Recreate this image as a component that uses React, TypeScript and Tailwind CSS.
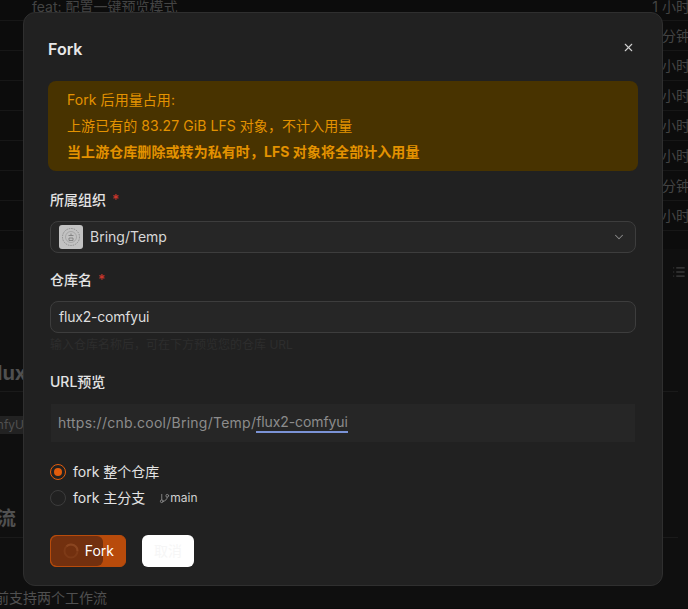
import { ChevronDown, GitBranch, List, X } from "lucide-react";

const font = "font-['Inter','Noto_Sans_CJK_SC',sans-serif]";

const rows = ["1 小时前", "9 分钟前", "2 小时前", "2 小时前", "2 小时前", "2 小时前", "9 分钟前", "2 小时前"];

function Label({ text, required }: { text: string; required?: boolean }) {
    return (
        <div className="flex h-5 items-center gap-1.5 text-sm font-medium leading-5 text-[#e4e4e4]">
            {text}
            {required && <span className="text-[#c9352b]">*</span>}
        </div>
    );
}

function Radio({ checked, children }: { checked?: boolean; children: React.ReactNode }) {
    return (
        <div className="flex h-[26px] items-center gap-[7px] text-sm text-[#e4e4e4]">
            <span className={`flex size-4 items-center justify-center rounded-full border ${checked ? "border-[#e25c0c]" : "border-[#3c3c3c]"}`}>
                {checked && <span className="size-2 rounded-full bg-[#e25c0c]" />}
            </span>
            {children}
        </div>
    );
}

export default function App() {
    return (
        <div className={`relative h-[609px] w-[688px] overflow-hidden bg-[#0c0c0c] ${font}`}>
            {/* page behind the dialog */}
            <div className="flex w-[704px] flex-col text-sm text-[#444]">
                {rows.map((time, i) => (
                    <div key={i} className={`flex items-center justify-between border-b border-[#171717] pl-8 ${i === 0 ? "h-[21px] pb-[6px]" : "h-[30px] pt-px"}`}>
                        <span>{i === 0 ? "feat: 配置一键预览模式" : ""}</span>
                        <span>{time}</span>
                    </div>
                ))}
            </div>
            <div className="mt-[18px] flex h-[359px] flex-col bg-[#0f0f0f] text-[#505050]">
                <div className="flex h-[46px] items-center justify-end pr-0.5">
                    <List size={14} strokeWidth={1.5} className="text-[#555]" />
                </div>
                <div className="mr-2.5 flex h-[98px] items-end border-b border-[#1a1a1a] pb-1 text-xl font-bold">
                    <span className="-ml-[11px]">flux</span>
                </div>
                <div className="mt-6 flex h-[18px] w-[24px] justify-end overflow-hidden bg-[#222] text-xs leading-[18px]">
                    <span className="whitespace-nowrap">comfyU</span>
                </div>
                <div className="mr-2.5 flex h-[104px] items-end border-b border-[#1a1a1a] pb-1 text-xl font-bold">
                    <span className="-ml-1">流</span>
                </div>
                <div className="-ml-[5px] mt-[50px] whitespace-nowrap text-sm">前支持两个工作流</div>
            </div>

            {/* dialog */}
            <div className="absolute left-[23px] top-3 flex h-[574px] w-[640px] flex-col rounded-xl border border-[#2f2f2f] bg-[#212121] pl-6 pr-6">
                <div className="flex h-[68px] shrink-0 items-center justify-between pr-[3px]">
                    <h2 className="mt-1 text-base font-semibold text-[#e8e8e8]">Fork</h2>
                    <X size={13} strokeWidth={2} className="text-[#d0d0d0]" />
                </div>

                <div className="h-[90px] w-[590px] shrink-0 rounded-lg bg-[#483300] px-[19px] py-1.5 text-sm leading-[26px] tracking-[0.07px] text-[#e39200]">
                    <div>Fork 后用量占用:</div>
                    <div>上游已有的 83.27 GiB LFS 对象，不计入用量</div>
                    <div className="font-bold">当上游仓库删除或转为私有时，LFS 对象将全部计入用量</div>
                </div>

                <div className="mt-[19px] flex w-[590px] flex-col pl-0.5 pr-0.5">
                    <Label text="所属组织" required />
                    <div className="mt-[11px] flex h-8 items-center gap-[7px] rounded-lg border border-[#3d3d3d] bg-[#262626] pl-2 pr-[9px] text-sm text-[#d8d8d8]">
                        <svg width="24" height="24" viewBox="0 0 24 24" className="shrink-0">
                            <rect width="24" height="24" rx="3" fill="#c2c2c2" />
                            <circle cx="12" cy="12" r="8.5" fill="none" stroke="#8d8d8d" strokeWidth="1" strokeDasharray="1.5 1" />
                            <circle cx="12" cy="12" r="5.5" fill="none" stroke="#a0a0a0" strokeWidth="0.8" />
                            <path d="M9.5 10.5h5M10 13h4v2.5h-4zM12 8.5v2" fill="none" stroke="#7f7f7f" strokeWidth="0.9" />
                        </svg>
                        <span className="flex-1">Bring/Temp</span>
                        <ChevronDown size={14} strokeWidth={1.75} className="text-[#8a8a8a]" />
                    </div>

                    <div className="mt-[17px]">
                        <Label text="仓库名" required />
                    </div>
                    <div className="mt-[11px] flex h-8 items-center rounded-lg border border-[#3d3d3d] bg-[#262626] px-2 text-sm tracking-[-0.2px] text-[#dedede]">
                        flux2-comfyui
                    </div>
                    <div className="mt-0.5 h-5 text-xs leading-5 text-[#2d2d2d]">输入仓库名称后，可在下方预览您的仓库 URL</div>

                    <div className="mt-[17px]">
                        <Label text="URL预览" />
                    </div>
                    <div className="mx-px mt-3 flex h-[38px] items-center bg-[#262626] px-[7px] text-sm text-[#8c8c8c]">
                        <span className="tracking-[0.25px]">https://cnb.cool/Bring/Temp/</span>
                        <span className="border-b-2 border-[#7b93d6] leading-[18px] tracking-[-0.1px]">flux2-comfyui</span>
                    </div>

                    <div className="mt-[17px] flex flex-col">
                        <Radio checked>fork 整个仓库</Radio>
                        <Radio>
                            fork 主分支
                            <span className="ml-[7px] flex items-center text-xs text-[#d0d0d0]">
                                <GitBranch size={11} strokeWidth={2} className="text-[#8a8a8a]" />
                                main
                            </span>
                        </Radio>
                    </div>

                    <div className="mt-6 flex gap-4">
                        <button className="relative flex h-8 w-[76px] items-center justify-end overflow-hidden rounded-md border border-[#b84b0b] bg-[#b84b0b] pr-[11px] text-sm text-white">
                            <span className="absolute inset-y-0 left-0 flex w-[52px] items-center rounded-md bg-[#72300f] pl-3">
                                <svg width="16" height="16" viewBox="0 0 16 16" fill="none">
                                    <circle cx="8" cy="8" r="6.5" stroke="#7d3a17" strokeWidth="2" />
                                    <path d="M3.4 3.4A6.5 6.5 0 0 1 14.5 8" stroke="#8a4520" strokeWidth="2" />
                                </svg>
                            </span>
                            <span className="relative">Fork</span>
                        </button>
                        <button className="h-8 w-[52px] rounded-md bg-white text-sm text-[#f6f6f6]">取消</button>
                    </div>
                </div>
            </div>
        </div>
    );
}
